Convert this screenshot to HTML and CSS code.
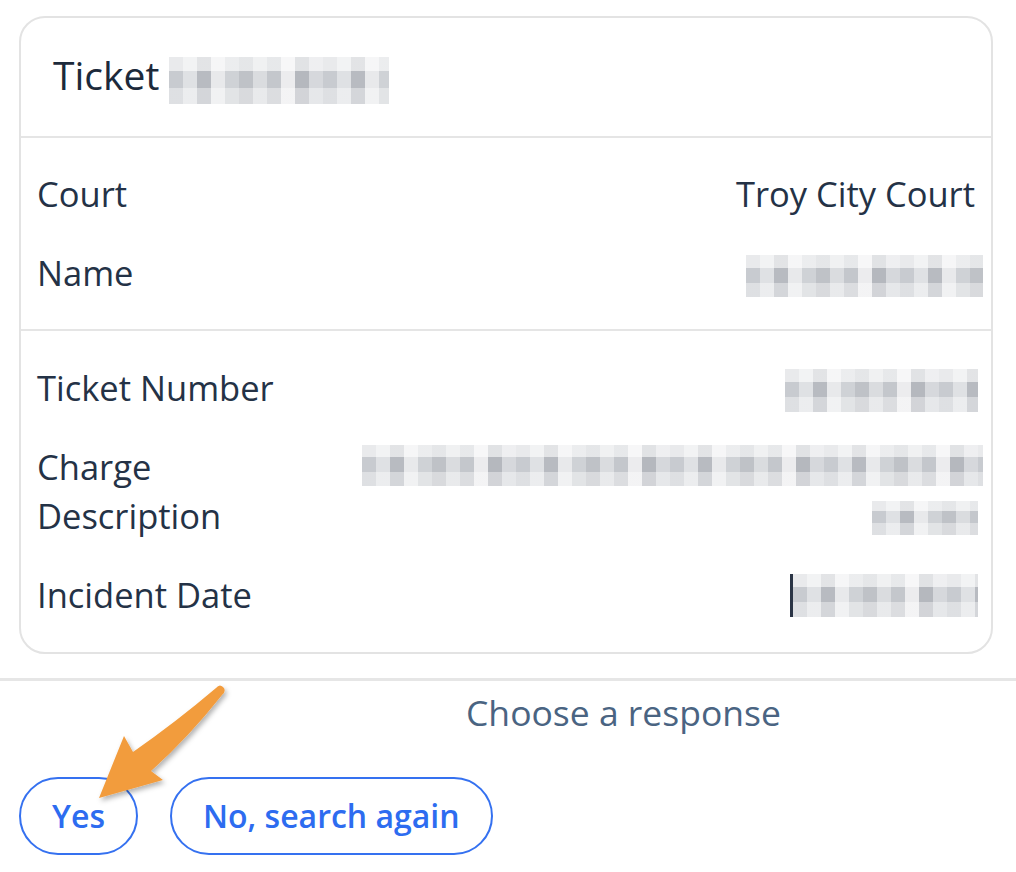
FILE: index.html
```html
<!DOCTYPE html>
<html lang="en">
<head>
<meta charset="utf-8">
<title>Ticket</title>
<link rel="stylesheet" href="styles.css">
</head>
<body>
<div class="page">
  <div class="wrap">
    <section class="card">
      <header class="card-head">
        <h2 class="card-title">Ticket <span class="redact redact-title"></span></h2>
      </header>
      <dl class="section">
        <dt class="label">Court</dt>
        <dd class="value">Troy City Court</dd>
        <dt class="label">Name</dt>
        <dd class="value"><span class="redact redact-name"></span></dd>
      </dl>
      <dl class="section last">
        <dt class="label">Ticket Number</dt>
        <dd class="value"><span class="redact redact-num"></span></dd>
        <dt class="label">Charge Description</dt>
        <dd class="value">
          <span class="redact redact-charge1"></span>
          <span class="redact redact-charge2"></span>
        </dd>
        <dt class="label">Incident Date</dt>
        <dd class="value"><span class="redact redact-date"></span></dd>
      </dl>
    </section>
  </div>
  <div class="separator"></div>
  <div class="prompt">Choose a response</div>
  <div class="actions">
    <button class="choice">Yes</button>
    <button class="choice">No, search again</button>
  </div>
  <svg class="annotation" width="1016" height="872" viewBox="0 0 1016 872" aria-hidden="true">
    <defs>
      <filter id="sh" x="-20%" y="-20%" width="140%" height="140%">
        <feDropShadow dx="2" dy="3" stdDeviation="2.5" flood-color="#000" flood-opacity="0.3"/>
      </filter>
    </defs>
    <path filter="url(#sh)" fill="#f29c3d" d="M216 688 Q220 683 224 688 Q226 692 222 695 Q188 738 151 771 L163 780 L99 798 L124 736 L133 752 Q176 722 216 688 Z"/>
  </svg>
</div>
</body>
</html>
```

FILE: styles.css
```css
* { box-sizing: border-box; }

html, body {
  margin: 0;
  padding: 0;
  background: #ffffff;
}

body {
  font-family: "Open Sans", "Liberation Sans", sans-serif;
  color: #243246;
}

.page {
  position: relative;
  width: 1016px;
  height: 872px;
  overflow: hidden;
}

.wrap {
  padding: 16px 23px 0 19px;
}

.card {
  border: 2px solid #e3e3e3;
  border-radius: 26px;
  background: #fff;
}

.card-head {
  padding: 30px 32px 32px;
  border-bottom: 2px solid #e5e5e5;
}

.card-title {
  margin: 0;
  font-size: 39px;
  font-weight: 500;
  line-height: 54px;
  color: #1c2a3b;
}

.section {
  margin: 0;
  padding: 31px 16px 32px;
  display: grid;
  grid-template-columns: 290px 1fr;
  column-gap: 35px;
  row-gap: 30px;
  font-size: 34.5px;
  line-height: 49px;
  border-bottom: 2px solid #e5e5e5;
}

.section.last {
  padding-top: 32px;
  padding-bottom: 33px;
  border-bottom: 0;
}

.label {
  margin: 0;
}

.value {
  margin: 0;
  text-align: right;
  display: flex;
  flex-direction: column;
  align-items: flex-end;
}

.redact {
  display: block;
  background-color: #d3d5d9;
  background-image:
    linear-gradient(to bottom, rgba(255,255,255,0.6) 0 30%, rgba(255,255,255,0) 30% 66%, rgba(255,255,255,0.4) 66% 100%),
    repeating-linear-gradient(to right,
      #c8cbd0 0 14px, #dfe1e4 14px 28px, #b8bbc1 28px 42px,
      #e8e9eb 42px 56px, #cfd2d6 56px 70px, #bfc2c7 70px 84px,
      #dadcdf 84px 98px, #c4c7cc 98px 112px, #ececee 112px 126px,
      #b5b8be 126px 140px, #d6d8dc 140px 154px);
}

.redact-title {
  display: inline-block;
  width: 220px;
  height: 47px;
  vertical-align: -14px;
}

.redact-name {
  width: 237px;
  height: 42px;
  margin: 7px -8px 0 0;
}

.redact-num {
  width: 193px;
  height: 43px;
  margin: 6px -3px 0 0;
}

.redact-charge1 {
  width: 621px;
  height: 41px;
  margin: 3px -8px 0 0;
}

.redact-charge2 {
  width: 106px;
  height: 34px;
  margin: 15px -3px 0 0;
}

.redact-date {
  width: 188px;
  height: 43px;
  margin: 4px -3px 0 0;
  border-left: 3px solid #2a3445;
}

.separator {
  margin-top: 24px;
  height: 3px;
  background: #e6e6e6;
}

.prompt {
  padding: 7px 0 0 466px;
  font-size: 35.5px;
  line-height: 49px;
  color: #4a6482;
}

.actions {
  display: flex;
  gap: 32px;
  padding: 40px 0 0 19px;
}

.choice {
  height: 78px;
  padding: 0 31px;
  border: 2px solid #3571f0;
  border-radius: 40px;
  background: #fff;
  color: #2d6cf0;
  font-family: "Open Sans", "Liberation Sans", sans-serif;
  font-size: 32px;
  font-weight: 600;
  line-height: 1;
}

.annotation {
  position: absolute;
  left: 0;
  top: 0;
  pointer-events: none;
}
```
